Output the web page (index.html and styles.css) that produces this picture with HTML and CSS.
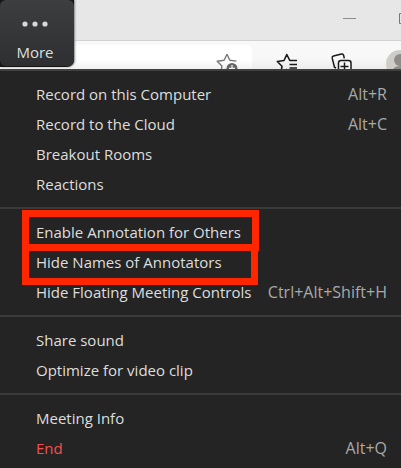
FILE: index.html
```
<!DOCTYPE html>
<html lang="en">
<head>
<meta charset="utf-8">
<title>Meeting menu</title>
<link rel="stylesheet" href="styles.css">
</head>
<body>
<header class="browser">
  <div class="titlebar">
    <button class="icon-button" aria-label="Minimize"><svg width="14" height="12" viewBox="0 0 14 12"><path d="M0 5.5h13" stroke="#8c8c8c"/></svg></button>
    <button class="icon-button maximize" aria-label="Maximize"><svg width="12" height="12" viewBox="0 0 12 12"><path d="M.5.5h10v10H.5z" fill="none" stroke="#777"/></svg></button>
  </div>
  <div class="toolbar">
    <div class="address">
      <button class="icon-button" aria-label="Add to favorites"><svg width="22" height="22" viewBox="0 0 22 22"><path d="M11 1.200l2.800 6 6.600.9M10 16.200l-5 3 .9-6.100L1.200 8.300l6.900-1.100L11 1.200" fill="none" stroke="#777" stroke-width="1.400" stroke-linejoin="round"/><circle cx="16" cy="15.500" r="5.500" fill="#666"/><path d="M16 12v6M13 15.500h6" stroke="#eee" stroke-width="1.300"/></svg></button>
    </div>
    <div class="tools">
      <button class="icon-button" aria-label="Favorites"><svg width="22" height="22" viewBox="0 0 22 22"><path d="M21 7.500h-7.200L10.800 1.500 8 7.500l-6.700 1L6 13.200l-1 6.500 6-3.400" fill="none" stroke="#191919" stroke-width="1.600" stroke-linejoin="round"/><path d="M13.500 11.500H21M13.500 15H21" stroke="#191919" stroke-width="1.600"/></svg></button>
      <button class="icon-button" aria-label="Collections"><svg width="22" height="22" viewBox="0 0 22 22"><path d="M5 15l-1.500-.8L1.200 5.200Q.9 3.500 2.500 3L10.500 1q1.700-.3 2.100 1.300l.7 3" fill="none" stroke="#191919" stroke-width="1.500"/><rect x="7.500" y="7.500" width="12.500" height="13" rx="2.500" fill="#f8f8f8" stroke="#191919" stroke-width="1.500"/><path d="M13.500 9.500v8M9.500 13.500h8" stroke="#191919" stroke-width="1.500"/></svg></button>
      <button class="icon-button" aria-label="Profile"><svg width="28" height="28" viewBox="0 0 28 28"><circle cx="14" cy="14" r="14" fill="#cfcdca"/><circle cx="14" cy="10" r="6" fill="#8e8b88"/><path d="M6 24q0-8 8-8t8 8" fill="#8e8b88"/></svg></button>
    </div>
  </div>
  <div class="more-frame">
    <button class="more"><svg width="22" height="6" viewBox="0 0 22 6" fill="#d8d8d8"><circle cx="1" cy="3" r="2.600"/><circle cx="11" cy="3" r="2.600"/><circle cx="21" cy="3" r="2.600"/></svg><span>More</span></button>
  </div>
</header>
<main class="menu">
  <div class="group">
    <button class="item"><span>Record on this Computer</span><kbd>Alt+R</kbd></button>
    <button class="item"><span>Record to the Cloud</span><kbd>Alt+C</kbd></button>
    <button class="item"><span>Breakout Rooms</span></button>
    <button class="item"><span>Reactions</span></button>
  </div>
  <div class="group">
    <button class="item marked"><span>Enable Annotation for Others</span></button>
    <button class="item marked"><span>Hide Names of Annotators</span></button>
    <button class="item"><span>Hide Floating Meeting Controls</span><kbd>Ctrl+Alt+Shift+H</kbd></button>
  </div>
  <div class="group">
    <button class="item"><span>Share sound</span></button>
    <button class="item"><span>Optimize for video clip</span></button>
  </div>
  <div class="group">
    <button class="item"><span>Meeting Info</span></button>
    <button class="item end"><span>End</span><kbd>Alt+Q</kbd></button>
  </div>
</main>
</body>
</html>
```
FILE: styles.css
```
*, *::after { box-sizing: border-box; }
body {
  margin: 0;
  min-height: 100vh;
  display: flex;
  flex-direction: column;
  overflow: hidden;
  background: #242424;
  font: 15px/20px "Open Sans", "Noto Sans", sans-serif;
}
button { border: 0; padding: 0; background: none; font: inherit; color: inherit; }
svg { display: block; overflow: visible; }
.icon-button { flex: none; }
.browser { position: relative; height: 69px; overflow: hidden; background: #f7f7f7; }
.titlebar {
  height: 41px;
  display: flex;
  justify-content: flex-end;
  align-items: flex-start;
  gap: 42px;
  padding-top: 13px;
  background: #e7e7e7;
  border-bottom: 1px solid #d2d2d2;
}
.maximize { margin-right: -10px; }
.toolbar {
  display: flex;
  height: 28px;
  padding-top: 4px;
  background: linear-gradient(#f8f8f8 60%, #ececec);
}
.address {
  flex: 1;
  display: flex;
  justify-content: flex-end;
  align-items: flex-start;
  padding: 8px 14px 0 0;
  border-top-right-radius: 5px;
  background: linear-gradient(#fff 60%, #f1f1f1);
}
.tools {
  flex: none;
  display: flex;
  align-items: flex-start;
  gap: 33px;
  padding: 8px 0 0 24px;
  margin-right: -13px;
}
.tools .icon-button:last-child { margin-top: -3px; }
.more-frame {
  position: absolute;
  top: 0;
  left: 0;
  width: 74px;
  height: 67px;
  background: #161616;
  border-bottom-right-radius: 7px;
  box-shadow: 1px 0 2px #888;
}
.more {
  width: 100%;
  height: 66px;
  display: flex;
  flex-direction: column;
  align-items: center;
  gap: 15px;
  padding: 21px 4px 0 0;
  border-radius: 6px;
  background: linear-gradient(#3d3e40, #2e2f31);
  color: #dedede;
}
.menu {
  flex: 1;
  border-top: 2px solid #404040;
  background: #242424;
  color: #dedede;
}
.group { padding: 9px 0 7px; }
.group + .group { border-top: 2px solid #3a3a3a; }
.item {
  position: relative;
  display: flex;
  justify-content: space-between;
  align-items: center;
  width: 100%;
  height: 30px;
  padding: 0 14px 2px 36px;
  white-space: nowrap;
}
.item kbd { font: inherit; font-size: 16px; color: #a9a9a9; }
.end span { color: #f4504f; }
.marked::after {
  content: "";
  position: absolute;
  top: -8px;
  left: 22px;
  width: 237px;
  height: 41px;
  border: 7px solid #ff2600;
}
.marked + .marked::after { top: -4px; width: 236px; }
```
